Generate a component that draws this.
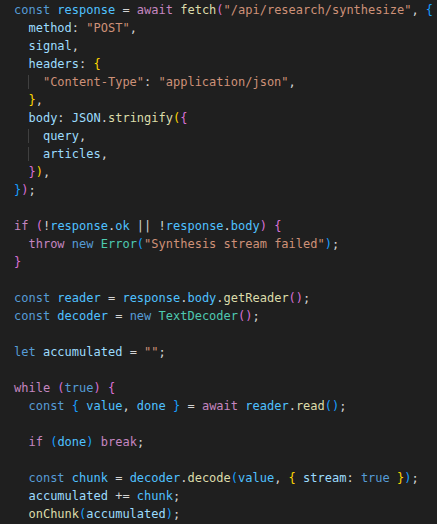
import React from "react";

type Tok = [string, string];

const K = "text-[#569cd6]";
const C = "text-[#c586c0]";
const V = "text-[#9cdcfe]";
const N = "text-[#4fc1ff]";
const F = "text-[#dcdcaa]";
const S = "text-[#ce9178]";
const T = "text-[#4ec9b0]";
const P = "text-[#d4d4d4]";
const B1 = "text-[#ffd700]";
const B2 = "text-[#da70d6]";
const B3 = "text-[#179fff]";

type Line = { guide?: boolean; indent: number; toks: Tok[] };

const lines: Line[] = [
  { indent: 0, toks: [["const", K], [" ", P], ["response", N], [" = ", P], ["await", C], [" ", P], ["fetch", F], ["(", B2], ["\"/api/research/synthesize\"", S], [", ", P], ["{", B3]] },
  { indent: 2, toks: [["method", V], [": ", P], ["\"POST\"", S], [",", P]] },
  { indent: 2, toks: [["signal", V], [",", P]] },
  { indent: 2, toks: [["headers", V], [": ", P], ["{", B1]] },
  { indent: 4, guide: true, toks: [["\"Content-Type\"", S], [": ", P], ["\"application/json\"", S], [",", P]] },
  { indent: 2, toks: [["}", B1], [",", P]] },
  { indent: 2, toks: [["body", V], [": ", P], ["JSON", V], [".", P], ["stringify", F], ["(", B1], ["{", B2]] },
  { indent: 4, guide: true, toks: [["query", V], [",", P]] },
  { indent: 4, guide: true, toks: [["articles", V], [",", P]] },
  { indent: 2, toks: [["}", B2], [")", B1], [",", P]] },
  { indent: 0, toks: [["}", B3], [")", B2], [";", P]] },
  { indent: 0, toks: [] },
  { indent: 0, toks: [["if", C], [" ", P], ["(", B2], ["!", P], ["response", N], [".", P], ["ok", N], [" || ", P], ["!", P], ["response", N], [".", P], ["body", N], [")", B2], [" ", P], ["{", B2]] },
  { indent: 2, toks: [["throw", C], [" ", P], ["new", K], [" ", P], ["Error", T], ["(", B3], ["\"Synthesis stream failed\"", S], [")", B3], [";", P]] },
  { indent: 0, toks: [["}", B2]] },
  { indent: 0, toks: [] },
  { indent: 0, toks: [["const", K], [" ", P], ["reader", N], [" = ", P], ["response", N], [".", P], ["body", N], [".", P], ["getReader", F], ["()", B2], [";", P]] },
  { indent: 0, toks: [["const", K], [" ", P], ["decoder", N], [" = ", P], ["new", K], [" ", P], ["TextDecoder", T], ["()", B2], [";", P]] },
  { indent: 0, toks: [] },
  { indent: 0, toks: [["let", K], [" ", P], ["accumulated", V], [" = ", P], ["\"\"", S], [";", P]] },
  { indent: 0, toks: [] },
  { indent: 0, toks: [["while", C], [" ", P], ["(", B2], ["true", K], [")", B2], [" ", P], ["{", B2]] },
  { indent: 2, toks: [["const", K], [" ", P], ["{", B3], [" ", P], ["value", N], [", ", P], ["done", N], [" ", P], ["}", B3], [" = ", P], ["await", C], [" ", P], ["reader", N], [".", P], ["read", F], ["()", B3], [";", P]] },
  { indent: 0, toks: [] },
  { indent: 2, toks: [["if", C], [" ", P], ["(", B3], ["done", N], [")", B3], [" ", P], ["break", C], [";", P]] },
  { indent: 0, toks: [] },
  { indent: 2, toks: [["const", K], [" ", P], ["chunk", N], [" = ", P], ["decoder", N], [".", P], ["decode", F], ["(", B3], ["value", N], [", ", P], ["{", B1], [" ", P], ["stream", V], [": ", P], ["true", K], [" ", P], ["}", B1], [")", B3], [";", P]] },
  { indent: 2, toks: [["accumulated", V], [" += ", P], ["chunk", N], [";", P]] },
  { indent: 2, toks: [["onChunk", F], ["(", B3], ["accumulated", V], [")", B3], [";", P]] },
];

export default function App() {
  return (
    <div
      className="w-[437px] h-[524px] overflow-hidden bg-[#1f1f1f] pl-[14px] pt-[1px] text-[12px] leading-[18px]"
      style={{ fontFamily: '"DejaVu Sans Mono", "Liberation Mono", monospace' }}
    >
      {lines.map((l, i) => (
        <div key={i} className="h-[18px] whitespace-pre">
          {l.guide ? (
            <>
              <span>{"  "}</span>
              <span className="shadow-[inset_1px_0_0_#404040]">{"  "}</span>
            </>
          ) : (
            <span>{" ".repeat(l.indent)}</span>
          )}
          {l.toks.map((t, j) => (
            <span key={j} className={t[1]}>
              {t[0]}
            </span>
          ))}
        </div>
      ))}
    </div>
  );
}
